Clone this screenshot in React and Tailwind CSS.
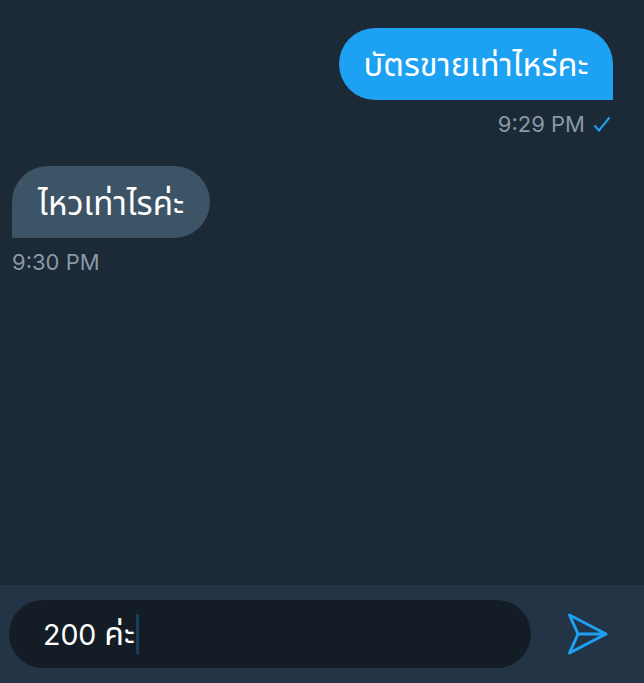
export default function App() {
  return (
    <div className="h-[683px] w-[644px] overflow-hidden flex flex-col bg-[#1c2936] font-['Inter','Noto_Sans_Thai','Noto_Sans',sans-serif]">
      <div className="flex-1 flex flex-col pt-[28px]">
        <div className="flex flex-col items-end pr-[31px]">
          <div className="h-[72px] w-[274px] pt-[3px] flex items-center justify-center rounded-[36px] rounded-br-none bg-[#1da1f2] text-white text-[32.5px] leading-none">บัตรขายเท่าไหร่คะ</div>
          <div className="mt-[10px] h-[28px] flex items-center gap-[8px] text-[#8899a6] text-[22px]">
            <span>9:29 PM</span>
            <svg width="18" height="16" viewBox="0 0 18 16" fill="none" className="mr-[2px]"><path d="M1.5 9.5 L6 14.5 L16.5 1.5" stroke="#1da1f2" strokeWidth="2" /></svg>
          </div>
        </div>
        <div className="flex flex-col items-start pl-[12px] mt-[28px]">
          <div className="h-[72px] w-[198px] pt-[3px] flex items-center justify-center rounded-[36px] rounded-bl-none bg-[#3d5466] text-white text-[33px] leading-none">ไหวเท่าไรค่ะ</div>
          <div className="mt-[10px] h-[28px] flex items-center text-[#8899a6] text-[22px]">9:30 PM</div>
        </div>
      </div>
      <div className="h-[98px] bg-[#243447] flex items-center pl-[9px]">
        <div className="h-[68px] w-[522px] rounded-[34px] bg-[#141d26] flex items-center pl-[34px] text-white text-[28.5px]">
          <span>200 <span className="text-[32px]">ค่ะ</span></span>
          <span className="ml-[1px] w-[3px] h-[40px] bg-[#14405c]" />
        </div>
        <svg width="42" height="44" viewBox="0 0 42 44" fill="none" className="ml-[36px]">
          <path d="M2.5 3 L39 22 L2.5 41 L11 22 Z M11 22 H39" stroke="#1da1f2" strokeWidth="3" strokeLinejoin="round" strokeLinecap="round" />
        </svg>
      </div>
    </div>
  );
}
